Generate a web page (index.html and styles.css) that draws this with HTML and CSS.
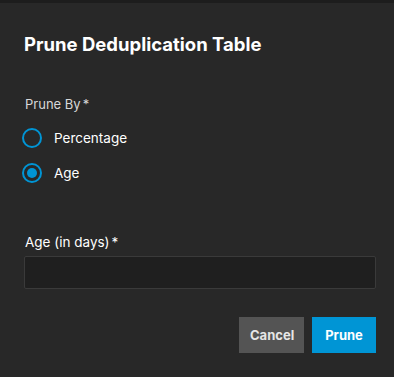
FILE: index.html
```html
<!DOCTYPE html>
<html lang="en">
<head>
  <meta charset="UTF-8">
  <title>Prune Deduplication Table</title>
  <link rel="stylesheet" href="styles.css">
</head>
<body>
  <div class="dialog">
    <h1 class="dialog__title">Prune Deduplication Table</h1>

    <div class="field">
      <div class="field__label">Prune By<span class="req">*</span></div>
      <label class="radio">
        <input type="radio" name="prune-by" value="percentage">
        <span class="radio__ring"></span>
        <span class="radio__text">Percentage</span>
      </label>
      <label class="radio">
        <input type="radio" name="prune-by" value="age" checked>
        <span class="radio__ring"></span>
        <span class="radio__text">Age</span>
      </label>
    </div>

    <div class="field field--input">
      <div class="field__label">Age (in days)<span class="req">*</span></div>
      <input class="text-input" type="text">
    </div>

    <div class="actions">
      <button class="btn btn--cancel">Cancel</button>
      <button class="btn btn--primary">Prune</button>
    </div>
  </div>
</body>
</html>
```

FILE: styles.css
```css
html, body {
  margin: 0;
  height: 100%;
}

body {
  background: #282828;
  font-family: Inter, "Noto Sans", sans-serif;
  color: #fff;
  border-top: 3px solid #1d1d1d;
  box-sizing: border-box;
}

.dialog {
  padding: 28px 18px 0 24px;
}

.dialog__title {
  margin: 0 0 38px;
  font-size: 18.5px;
  font-weight: 700;
  line-height: 26px;
}

.field__label {
  font-size: 13px;
  line-height: 18px;
  color: #d8d8d8;
  padding-left: 1px;
}

.req {
  margin-left: 2px;
}

.radio {
  display: flex;
  align-items: center;
  height: 35px;
  cursor: pointer;
}

.radio:first-of-type {
  margin-top: 7px;
}

.radio input {
  display: none;
}

.radio__ring {
  width: 16px;
  height: 16px;
  margin-left: -2px;
  border: 2px solid #0095d5;
  border-radius: 50%;
  display: grid;
  place-items: center;
  box-sizing: content-box;
}

.radio input:checked + .radio__ring::after {
  content: '';
  width: 10px;
  height: 10px;
  border-radius: 50%;
  background: #0095d5;
}

.radio__text {
  margin-left: 12px;
  font-size: 13.5px;
  color: #fff;
}

.field--input {
  margin-top: 43px;
}

.field--input .field__label {
  color: #fff;
  font-size: 13.5px;
}

.text-input {
  display: block;
  width: 100%;
  height: 33px;
  margin-top: 5px;
  background: #1f1f1f;
  border: 1px solid #3a3a3a;
  border-radius: 2px;
  box-sizing: border-box;
  color: #fff;
}

.actions {
  display: flex;
  justify-content: flex-end;
  gap: 8px;
  margin-top: 28px;
}

.btn {
  height: 36px;
  min-width: 64px;
  border: none;
  border-radius: 0;
  padding: 0 11px;
  font: 700 13px Inter, "Noto Sans", sans-serif;
  color: #fff;
  cursor: pointer;
}

.btn--cancel {
  width: 65px;
  background: #545454;
  color: #e6e6e6;
}

.btn--primary {
  background: #0095d5;
}
```
